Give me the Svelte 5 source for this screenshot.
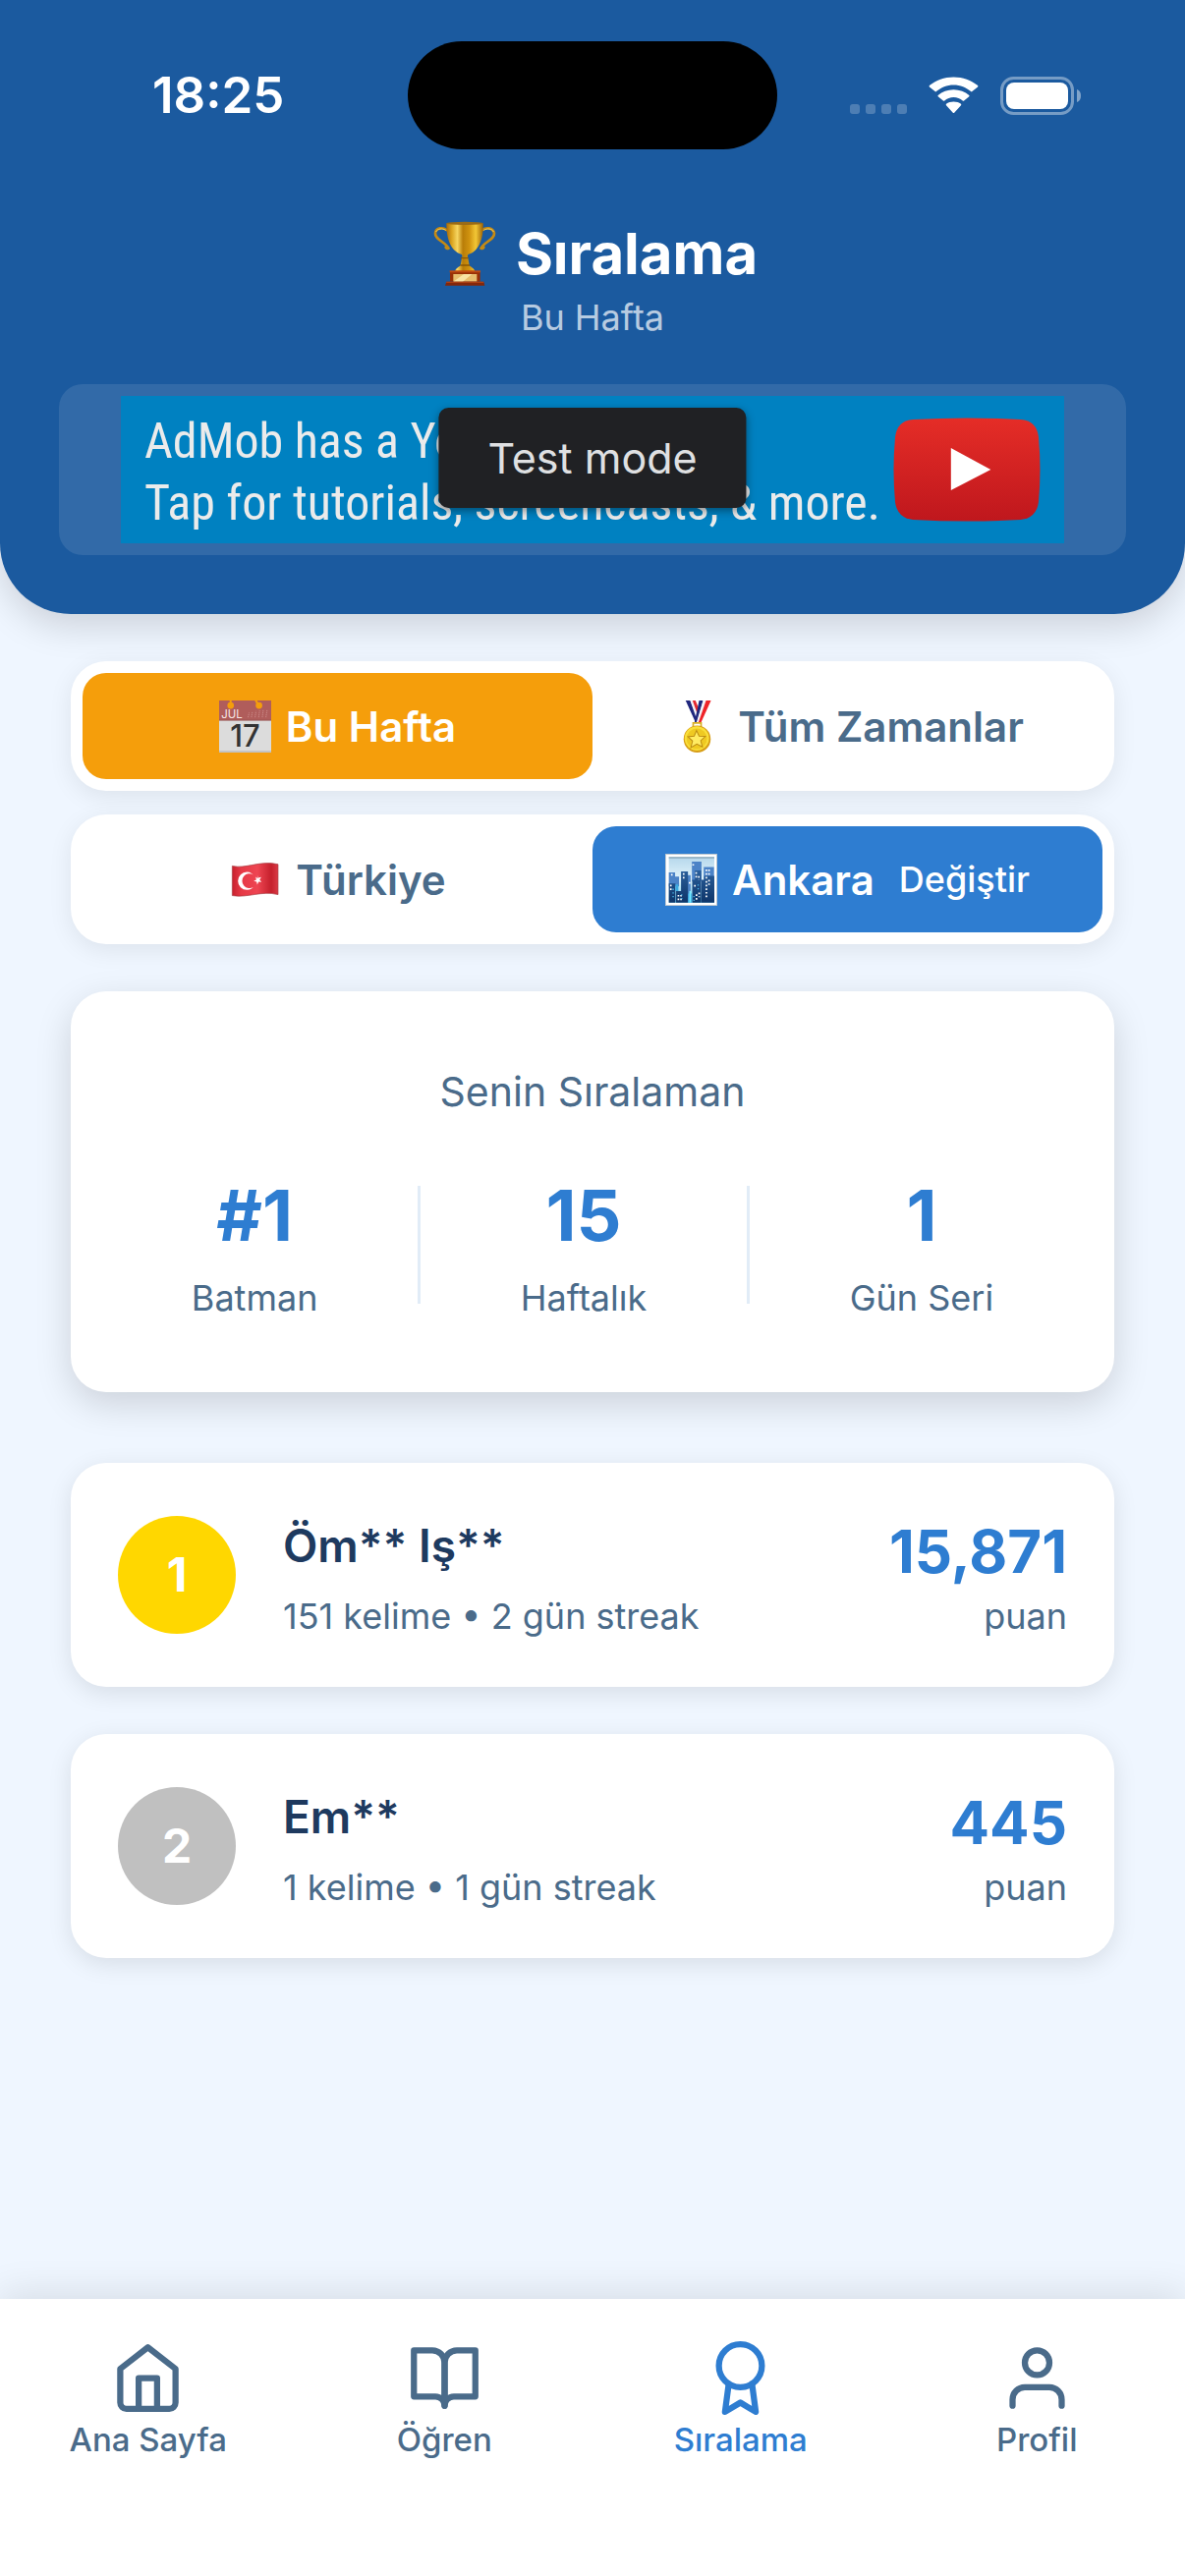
<script lang="ts">
	let period = $state('week');
	let region = $state('city');
	let tab = $state('ranking');

	const stats = [
		{ value: '#1', label: 'Batman' },
		{ value: '15', label: 'Haftalık' },
		{ value: '1', label: 'Gün Seri' }
	];

	const players = [
		{ rank: 1, name: 'Öm** Iş**', words: 151, streak: 2, score: '15,871' },
		{ rank: 2, name: 'Em**', words: 1, streak: 1, score: '445' }
	];

	const tabs = [
		{ id: 'home', label: 'Ana Sayfa' },
		{ id: 'learn', label: 'Öğren' },
		{ id: 'ranking', label: 'Sıralama' },
		{ id: 'profile', label: 'Profil' }
	];
</script>

<div class="app">
	<header>
		<div class="status-bar">
			<span class="time">18:25</span>
			<div class="island"></div>
			<div class="status-icons">
				<svg width="58" height="40" viewBox="0 0 58 40" fill="#fff" opacity="0.22">
					<rect x="0" y="29" width="10" height="10" rx="3" />
					<rect x="16" y="29" width="10" height="10" rx="3" />
					<rect x="32" y="29" width="10" height="10" rx="3" />
					<rect x="48" y="29" width="10" height="10" rx="3" />
				</svg>
				<svg width="51" height="38" viewBox="0 0 51 38" fill="#fff">
					<path d="M25.500 8.500c6.800 0 13 2.600 17.600 6.600.4.400.9.400 1.300 0l5.700-4.700c.4-.4.4-1 0-1.400C43.500 3.800 34.900.5 25.500.5S7.500 3.800.900 9c-.4.400-.4 1 0 1.400l5.700 4.700c.4.400.9.400 1.300 0C12.500 11.100 18.700 8.500 25.500 8.500z" />
					<path d="M25.500 21c3.500 0 6.800 1.300 9.200 3.500.4.400 1 .4 1.400 0l5.200-4.200c.4-.4.4-1 0-1.400-4.100-3.600-9.700-5.700-15.800-5.700s-11.700 2.100-15.800 5.700c-.4.400-.4 1 0 1.400l5.200 4.200c.4.400 1 .4 1.400 0 2.400-2.200 5.700-3.500 9.200-3.500z" />
					<path d="M33 29.200c.4-.4.400-1 0-1.400-2-1.500-4.600-2.300-7.500-2.300s-5.500.8-7.500 2.300c-.4.400-.4 1 0 1.400l6.800 7.600c.4.400 1 .4 1.400 0z" />
				</svg>
				<svg width="82" height="40" viewBox="0 0 82 40">
					<rect x="1.500" y="2.500" width="72" height="36" rx="12" fill="none" stroke="#fff" stroke-width="3" opacity="0.4" />
					<rect x="6" y="7" width="63" height="27" rx="8" fill="#fff" />
					<path d="M78 14c3 1 4 3.500 4 6.500S81 26 78 27z" fill="#fff" opacity="0.45" />
				</svg>
			</div>
		</div>

		<h1>
			<svg width="76" height="76" viewBox="12 30 228 228" aria-hidden="true">
				<defs>
					<linearGradient id="gold">
						<stop offset="0" stop-color="#a86a08" />
						<stop offset="0.15" stop-color="#dba520" />
						<stop offset="0.3" stop-color="#f6d560" />
						<stop offset="0.45" stop-color="#b97d08" />
						<stop offset="0.62" stop-color="#cf920f" />
						<stop offset="0.8" stop-color="#f3c736" />
						<stop offset="1" stop-color="#9c6206" />
					</linearGradient>
				</defs>
				<g fill="none" stroke="#c58a14" stroke-width="8" stroke-linecap="round">
					<path d="M70 72C60 64 38 64 36 82c-2 20 34 28 40 46M180 72c10-8 32-8 36 10 2 20-34 28-40 46" />
					<path d="M76 128c-3 2-6 0-8-3M176 128c3 2 6 0 8-3" />
				</g>
				<path d="M38 78c4-10 20-12 30-5M214 78c-4-10-20-12-30-5" fill="none" stroke="#f2cf61" stroke-width="3" />
				<path d="M70 52h112c2 48-14 86-44 94-4 2-4 8-2 12l4 22c4 6 14 8 16 16v6H97v-6c2-8 12-10 16-16l4-22c2-4 2-10-2-12-30-8-46-46-45-94z" fill="url(#gold)" />
				<ellipse cx="126" cy="52" rx="56" ry="5" fill="#9a6b17" />
				<path d="M114 158h23M112 180h29" stroke="#8b5804" stroke-width="4" />
				<path d="M81 198h92v32H81z" fill="#983007" />
				<path d="M80 196h94v6H80z" fill="#c04a12" />
				<path d="M91 207h72v23H91z" fill="#e7bd6d" />
				<path d="M91 230l32-23h25l-28 23z" fill="#f8e3a4" />
				<path d="M70 230h114l3 12H66z" fill="#83270a" />
				<path d="M70 230h114v3H69z" fill="#b94818" />
			</svg>
			<span>Sıralama</span>
		</h1>
		<p class="subtitle">Bu Hafta</p>

		<div class="banner">
			<a class="ad" href="#ad">
				<span class="ad-text">AdMob has a YouTube channel<br />Tap for tutorials, screencasts, &amp; more.</span>
				<svg width="150" height="106" viewBox="0 0 148 106" preserveAspectRatio="none" aria-hidden="true">
					<defs>
						<linearGradient id="red" x2="0" y2="1">
							<stop offset="0" stop-color="#e52d27" />
							<stop offset="1" stop-color="#bf171d" />
						</linearGradient>
					</defs>
					<path d="M20 2Q74-1 128 2q16 1 18 18 3 33 0 66-2 16-18 18-54 3-108 0-16-2-18-18-3-33 0-66Q4 3 20 2z" fill="url(#red)" />
					<path d="M58 31l40 22-40 21z" fill="#fff" />
				</svg>
			</a>
			<div class="test-mode">Test mode</div>
		</div>
	</header>

	<main>
		<div class="toggles">
			<div class="toggle">
				<button class:week={period === 'week'} onclick={() => (period = 'week')}>
					<svg class="emoji" viewBox="40 40 158 158" aria-hidden="true">
						<path d="M40 40h158v158H40z" fill="#dcdcdc" />
						<path d="M40 40h158v60H40z" fill="#b05d5b" />
						<path d="M40 100h158" stroke="#8f4b49" stroke-width="2" />
						<path d="M40 195h158" stroke="#bdbdbd" stroke-width="5" />
						<g fill="#f59e0b">
							<circle cx="75" cy="55" r="10" />
							<circle cx="161" cy="55" r="10" />
							<path d="M72 40h6v10h-6zM148 40h7l6 10-7 2z" />
						</g>
						<path d="M128 91l3-14M138 91l3-17M149 91l3-19M160 91l3-21M171 91l3-23M182 91l4-24" stroke="#c98785" stroke-width="3" stroke-dasharray="4 2" />
						<text class="cal-month" x="47" y="94">JUL</text>
						<text class="cal-day" x="119" y="181" text-anchor="middle">17</text>
					</svg>
					Bu Hafta
				</button>
				<button class:week={period === 'all'} onclick={() => (period = 'all')}>
					<svg class="emoji" viewBox="19 38 158 158" aria-hidden="true">
						<path d="M63 38h14l24 60-8 6z" fill="#20277d" />
						<path d="M77 38h8l16 40-4 18z" fill="#f4f4f8" />
						<path d="M84 38h9l10 25-5 14z" fill="#e5282e" />
						<path d="M104 38h12L98 104h-8z" fill="#20277d" />
						<path d="M116 38h9l-22 66h-7z" fill="#f4f4f8" />
						<path d="M125 38h15l-30 66h-8z" fill="#ee2429" />
						<path d="M86 106h24v16H86z" fill="none" stroke="#d8ae25" stroke-width="5" />
						<circle cx="98" cy="155" r="41" fill="#d79d15" />
						<circle cx="97" cy="153" r="37" fill="#f9df3b" />
						<circle cx="97" cy="154" r="31" fill="#efc922" />
						<path d="M96 129l8 17 19 1-14 13 5 19-17-9-18 11 5-20-14-13 19-2z" fill="#ffeb62" stroke="#bd8d12" stroke-width="3" />
					</svg>
					Tüm Zamanlar
				</button>
			</div>

			<div class="toggle">
				<button class:place={region === 'country'} onclick={() => (region = 'country')}>
					<svg class="emoji" viewBox="48 57 158 158" aria-hidden="true">
						<defs>
							<linearGradient id="flag">
								<stop offset="0" stop-color="#c8202d" />
								<stop offset="0.2" stop-color="#e63946" />
								<stop offset="0.55" stop-color="#ee4552" />
								<stop offset="0.85" stop-color="#c5202c" />
								<stop offset="1" stop-color="#d93a45" />
							</linearGradient>
						</defs>
						<path d="M58 94c42 10 85-18 139-5v92c-50-13-92 11-139 3z" fill="url(#flag)" stroke="#a53a40" stroke-width="2" />
						<path d="M122 121a27 27 0 1 0 0 37 22 22 0 1 1 0-37z" fill="#fff" />
						<path d="M134 122l3 8 9-2-5 8 6 7-9-1-4 9-2-9-9-2 8-4-2-9 7 5z" fill="#fff" />
					</svg>
					Türkiye
				</button>
				<button class:place={region === 'city'} onclick={() => (region = 'city')}>
					<svg class="emoji" viewBox="1374 57 158 158" aria-hidden="true">
						<defs>
							<linearGradient id="sky" x2="0" y2="1">
								<stop offset="0" stop-color="#b5d7ec" />
								<stop offset="0.5" stop-color="#e2f4fb" />
								<stop offset="1" stop-color="#5cc5ec" />
							</linearGradient>
							<linearGradient id="tower" x2="0" y2="1">
								<stop offset="0" stop-color="#2a5f9b" />
								<stop offset="1" stop-color="#0e3569" />
							</linearGradient>
						</defs>
						<path d="M1374 57h158v158h-158z" fill="#fff" />
						<path d="M1375 58h156v156h-156z" fill="none" stroke="#8b9fae" stroke-width="2" />
						<path d="M1385 67h138v138h-138z" fill="url(#sky)" />
						<path d="M1385 67h138v4h-138z" fill="#8eabbb" />
						<path d="M1385 114h19v12h12v30h-31zM1442 122h9v70h-9zM1455 81h29v60h-29zM1491 97h31v60h-31z" fill="#4c83c7" />
						<path d="M1385 147h20v58h-20zM1407 170h16v35h-16zM1422 111h21v94h-21zM1456 136h8v-28h19v97h-27zM1484 136h8v-12h31v81h-39z" fill="url(#tower)" />
						<path d="M1405 150h9v20h-9zM1443 178h12v27h-12z" fill="#3ba8df" />
						<path d="M1447 170h5v35h-5z" fill="#75ecff" />
						<g stroke="#fff" stroke-width="5" stroke-dasharray="5 6">
							<path d="M1430 116v22M1391 151v20M1414 182v18M1422 182v18M1468 113v18M1476 125v12M1499 105v28M1507 105v18M1464 152v10M1469 180v20M1477 175v14M1499 140v50M1507 136v22M1394 118v5M1448 143v5M1459 88v5" />
						</g>
						<path d="M1398 163v32M1424 180v20M1461 185v18M1474 150v20" stroke="#49b6e9" stroke-width="4" stroke-dasharray="4 7" />
					</svg>
					Ankara
					<span class="change">Değiştir</span>
				</button>
			</div>
		</div>

		<section class="summary">
			<h2>Senin Sıralaman</h2>
			<div class="stats">
				{#each stats as stat, i}
					{#if i > 0}
						<div class="divider"></div>
					{/if}
					<div class="stat">
						<strong>{stat.value}</strong>
						<span>{stat.label}</span>
					</div>
				{/each}
			</div>
		</section>

		<ol>
			{#each players as player}
				<li>
					<span class="rank" class:silver={player.rank === 2}>{player.rank}</span>
					<div class="player">
						<h3>{player.name}</h3>
						<p>{player.words} kelime • {player.streak} gün streak</p>
					</div>
					<div class="score">
						<strong>{player.score}</strong>
						<span>puan</span>
					</div>
				</li>
			{/each}
		</ol>
	</main>

	<nav>
		{#each tabs as item}
			<button class:active={tab === item.id} onclick={() => (tab = item.id)}>
				<svg viewBox="0 0 24 24" aria-hidden="true">
					{#if item.id === 'home'}
						<path d="M3 9l9-7 9 7v11a2 2 0 0 1-2 2H5a2 2 0 0 1-2-2z" />
						<path d="M9 22V12h6v10" />
					{:else if item.id === 'learn'}
						<path d="M2 3h6a4 4 0 0 1 4 4v14a3 3 0 0 0-3-3H2z" />
						<path d="M22 3h-6a4 4 0 0 0-4 4v14a3 3 0 0 1 3-3h7z" />
					{:else if item.id === 'ranking'}
						<circle cx="12" cy="8" r="7" />
						<path d="M8.210 13.890L7 23l5-3 5 3-1.210-9.120" />
					{:else}
						<path d="M20 21v-2a4 4 0 0 0-4-4H8a4 4 0 0 0-4 4v2" />
						<circle cx="12" cy="7" r="4" />
					{/if}
				</svg>
				{item.label}
			</button>
		{/each}
	</nav>
</div>

<style>
	:global(body) {
		margin: 0;
		background: #eff6ff;
	}

	.app {
		min-height: 100vh;
		display: flex;
		flex-direction: column;
		background: #eff6ff;
		color: #4a6b8a;
		font-family: Inter, sans-serif;
		font-size: 36px;
		line-height: 48px;
	}

	h1,
	h2,
	h3,
	p,
	ol {
		margin: 0;
		padding: 0;
	}

	button {
		border: none;
		background: none;
		padding: 0;
		color: inherit;
		font-family: inherit;
		cursor: pointer;
	}

	header {
		background: #1b5a9f;
		color: white;
		padding: 0 60px 60px;
		border-radius: 0 0 72px 72px;
		box-shadow: 0 12px 36px rgba(0, 0, 0, 0.15);
	}

	.status-bar {
		display: grid;
		grid-template-columns: 1fr 376px 1fr;
		align-items: center;
		height: 194px;
	}

	.time {
		padding-left: 95px;
		font-size: 51px;
		font-weight: 600;
	}

	.island {
		height: 110px;
		border-radius: 55px;
		background: black;
	}

	.status-icons {
		display: flex;
		align-items: center;
		justify-content: flex-end;
		gap: 22px;
		padding-right: 46px;
	}

	h1 {
		display: flex;
		align-items: center;
		justify-content: center;
		gap: 14px;
		margin: 26px 0 3px;
		font-size: 58px;
		line-height: 76px;
		font-weight: 700;
	}

	.subtitle {
		text-align: center;
		color: rgba(255, 255, 255, 0.7);
	}

	.banner {
		position: relative;
		display: flex;
		justify-content: center;
		margin-top: 44px;
		padding: 12px;
		border-radius: 24px;
		background: rgba(255, 255, 255, 0.1);
	}

	.ad {
		box-sizing: border-box;
		display: flex;
		align-items: center;
		justify-content: space-between;
		width: 960px;
		height: 150px;
		padding: 0 24px;
		background: #0081c1;
		color: #ebebeb;
		text-decoration: none;
	}

	.ad svg {
		flex-shrink: 0;
	}

	.ad-text {
		padding-top: 6px;
		font-family: 'Roboto Condensed', 'Liberation Sans Narrow', Roboto, sans-serif;
		font-size: 50px;
		line-height: 63px;
		white-space: nowrap;
	}

	.test-mode {
		position: absolute;
		top: 24px;
		left: 50%;
		transform: translateX(-50%);
		padding: 0 50px;
		border-radius: 10px;
		background: #202124;
		color: #dfe0e2;
		box-shadow: 0 3px 9px rgba(0, 0, 0, 0.4);
		font-size: 43px;
		line-height: 102px;
		white-space: nowrap;
	}

	main {
		flex: 1;
		padding: 48px 72px;
	}

	.toggles {
		display: grid;
		gap: 24px;
	}

	.toggle {
		display: grid;
		grid-template-columns: 1fr 1fr;
		padding: 12px;
		border-radius: 36px;
		background: white;
		box-shadow: 0 6px 24px rgba(0, 0, 0, 0.08);
	}

	.toggle button {
		display: flex;
		align-items: center;
		justify-content: center;
		gap: 15px;
		height: 108px;
		border-radius: 24px;
		font-size: 42px;
		font-weight: 600;
	}

	.toggle .week {
		background: #f59e0b;
		color: white;
	}

	.toggle .place {
		background: #2e7dd1;
		color: white;
	}

	.emoji {
		width: 53px;
		height: 53px;
	}

	.cal-month {
		font-size: 34px;
		font-weight: 400;
		fill: #f5e6e5;
	}

	.cal-day {
		font-size: 92px;
		font-weight: 500;
		fill: #333;
	}

	.change {
		margin-left: 10px;
		font-size: 36px;
		font-weight: 500;
	}

	.summary {
		margin-top: 48px;
		padding: 72px;
		border-radius: 36px;
		background: white;
		box-shadow: 0 12px 36px rgba(0, 0, 0, 0.15);
	}

	h2 {
		margin-bottom: 48px;
		text-align: center;
		font-size: 41px;
		line-height: 60px;
		font-weight: 400;
	}

	.stats {
		display: flex;
		align-items: center;
		justify-content: space-around;
	}

	.stat {
		display: grid;
		gap: 12px;
		text-align: center;
	}

	.stat strong {
		color: #2e7dd1;
		font-size: 72px;
		line-height: 96px;
	}

	.divider {
		width: 3px;
		height: 120px;
		background: #e1ecf7;
	}

	ol {
		display: grid;
		gap: 48px;
		margin-top: 72px;
		list-style: none;
	}

	li {
		display: flex;
		align-items: center;
		gap: 48px;
		padding: 48px;
		border-radius: 36px;
		background: white;
		box-shadow: 0 6px 24px rgba(0, 0, 0, 0.1);
	}

	.rank {
		width: 120px;
		border-radius: 50%;
		background: #ffd700;
		color: white;
		text-align: center;
		font-size: 48px;
		line-height: 120px;
		font-weight: 700;
	}

	.silver {
		background: #c0c0c0;
	}

	.player {
		flex: 1;
	}

	h3 {
		margin-bottom: 12px;
		color: #1e3a5f;
		font-size: 46px;
		line-height: 72px;
		font-weight: 600;
	}

	.score {
		display: grid;
		text-align: right;
	}

	.score strong {
		color: #2e7dd1;
		font-size: 60px;
		line-height: 84px;
	}

	nav {
		display: grid;
		grid-template-columns: repeat(4, 1fr);
		padding: 43px 0 115px;
		background: white;
		box-shadow: 0 -6px 36px rgba(0, 0, 0, 0.1);
	}

	nav button {
		display: flex;
		flex-direction: column;
		align-items: center;
		gap: 1px;
		font-size: 33px;
		line-height: 48px;
		font-weight: 500;
	}

	nav svg {
		width: 75px;
		height: 75px;
		fill: none;
		stroke: currentColor;
		stroke-width: 2;
		stroke-linecap: round;
		stroke-linejoin: round;
	}

	nav .active {
		color: #2e7dd1;
	}
</style>
